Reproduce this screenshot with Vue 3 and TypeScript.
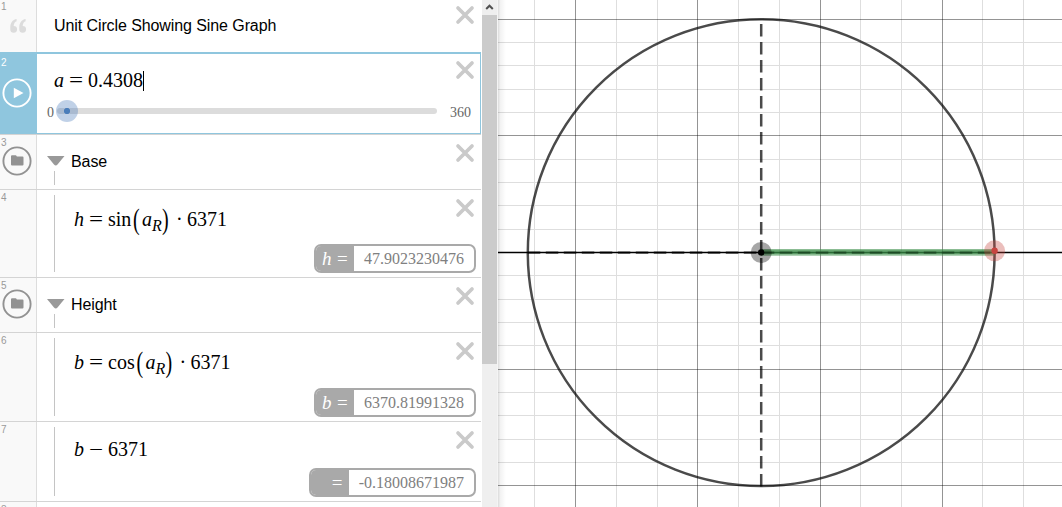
<script setup lang="ts">
interface Token { t: string; k?: string; w: number }
interface Row {
  n: number
  h: number
  kind: 'note' | 'slider' | 'folder' | 'expr'
  text?: string
  tokens?: Token[]
  label?: string
  value?: string
}

const call = (v: string, fn: string, fnWidth: number): Token[] => [
  { t: v, k: 'it', w: 15 },
  { t: '=', k: 'op', w: 19 },
  { t: fn, w: fnWidth },
  { t: '(', k: 'paren', w: 9 },
  { t: 'a', k: 'it', w: 10 },
  { t: 'R', k: 'sub', w: 10 },
  { t: ')', k: 'paren', w: 14 },
  { t: '·', w: 11 },
  { t: '6371', w: 40 },
]

const rows: Row[] = [
  { n: 1, h: 52, kind: 'note', text: 'Unit Circle Showing Sine Graph' },
  { n: 2, h: 83, kind: 'slider' },
  { n: 3, h: 55, kind: 'folder', text: 'Base' },
  { n: 4, h: 88, kind: 'expr', tokens: call('h', 'sin', 25), label: 'h', value: '47.9023230476' },
  { n: 5, h: 55, kind: 'folder', text: 'Height' },
  { n: 6, h: 89, kind: 'expr', tokens: call('b', 'cos', 28.5), label: 'b', value: '6370.81991328' },
  {
    n: 7, h: 80, kind: 'expr', label: '', value: '-0.18008671987',
    tokens: [{ t: 'b', k: 'it', w: 15 }, { t: '−', k: 'op', w: 19 }, { t: '6371', w: 40 }],
  },
  { n: 8, h: 60, kind: 'expr' },
]

const minorX = [534, 616, 657, 738, 779, 860, 901, 982, 1023]
const majorX = [575, 697, 820, 942]
const minorY = [42, 65, 89, 112, 159, 182, 205, 229, 275, 299, 322, 345, 392, 415, 439, 462]
const majorY = [19, 135, 369, 485]
</script>

<template>
  <div class="app">
    <div class="list">
      <div v-for="r in rows" :key="r.n" class="row" :class="r.kind" :style="{ height: r.h + 'px' }">
        <div class="gutter">
          <span class="num">{{ r.n }}</span>
          <svg v-if="r.kind === 'note'" class="quote" width="17" height="15" viewBox="0 0 17 15">
            <path d="M6.600 0C2.600.600.300 3.800.300 8.600V10.400a3.400 3.400 0 1 0 3.400-3.500C3.900 4.400 4.900 2.900 6.600 2.300ZM15.600 0C11.600.600 9.300 3.800 9.300 8.600V10.400a3.400 3.400 0 1 0 3.400-3.500C12.900 4.400 13.900 2.900 15.600 2.300Z" fill="#dcdcdc" />
          </svg>
          <svg v-else-if="r.kind === 'slider'" class="round" width="30" height="30" viewBox="0 0 30 30">
            <circle cx="15" cy="15" r="13.600" fill="none" stroke="#fff" stroke-width="1.900" />
            <path d="M11.800 9.800V20.200L21.500 15Z" fill="#fff" />
          </svg>
          <svg v-else-if="r.kind === 'folder'" class="round" width="30" height="30" viewBox="0 0 30 30">
            <circle cx="15" cy="15" r="13.600" fill="none" stroke="#929292" stroke-width="1.900" />
            <path d="M9 10.300q0-1 1-1h3.500q.8 0 1.100.8l.2.400h5.700q1 0 1 1v7.100q0 1-1 1H10q-1 0-1-1Z" fill="#929292" />
          </svg>
        </div>
        <div class="body">
          <span v-if="r.kind === 'note'" class="note-text">{{ r.text }}</span>
          <template v-else-if="r.kind === 'slider'">
            <div class="math first">
              <span class="it" style="width: 15px">a</span>
              <span class="op">=</span>
              <span>0.4308</span>
              <i class="caret"></i>
            </div>
            <div class="slide">
              <span class="min">0</span>
              <div class="track"><i class="thumb"></i></div>
              <span class="max">360</span>
            </div>
          </template>
          <template v-else-if="r.kind === 'folder'">
            <div class="folder-head">
              <svg width="18" height="10" viewBox="0 0 18 10"><path d="M0 0H17.500L10.500 8.500Q8.750 10.500 7 8.500Z" fill="#999" /></svg>
              <span>{{ r.text }}</span>
            </div>
            <i class="stub"></i>
          </template>
          <template v-else>
            <i class="tree"></i>
            <div v-if="r.tokens" class="math" :class="{ plain: !r.label }">
              <span v-for="(t, i) in r.tokens" :key="i" :class="t.k" :style="{ width: t.w + 'px' }">{{ t.t }}</span>
            </div>
            <div v-if="r.value" class="result">
              <div class="lab"><em>{{ r.label }}</em><b>=</b></div>
              <div class="val">{{ r.value }}</div>
            </div>
          </template>
          <svg class="close" width="20" height="20" viewBox="0 0 20 20">
            <path d="M3 3L17 17M17 3L3 17" stroke="#cacaca" stroke-width="3.700" stroke-linecap="round" />
          </svg>
        </div>
      </div>
    </div>
    <div class="scroll">
      <svg width="15" height="15" viewBox="0 0 15 15"><path d="M4.200 9L7.500 5.700L10.800 9" fill="none" stroke="#505050" stroke-width="2" /></svg>
      <i class="bar"></i>
    </div>
    <svg class="graph" width="564" height="507" viewBox="498 0 564 507">
      <defs>
        <linearGradient id="edge"><stop offset="0" stop-color="#000" stop-opacity=".14" /><stop offset=".3" stop-color="#000" stop-opacity=".05" /><stop offset="1" stop-color="#000" stop-opacity="0" /></linearGradient>
      </defs>
      <g shape-rendering="crispEdges">
        <rect v-for="x in minorX" :key="'a' + x" :x="x" y="0" width="1" height="507" fill="#dedede" />
        <rect v-for="y in minorY" :key="'b' + y" x="498" :y="y" width="564" height="1" fill="#dedede" />
        <rect v-for="x in majorX" :key="'c' + x" :x="x" y="0" width="1" height="507" fill="#000" fill-opacity=".42" />
        <rect v-for="y in majorY" :key="'d' + y" x="498" :y="y" width="564" height="1" fill="#000" fill-opacity=".42" />
      </g>
      <path d="M498 252.500H1062" stroke="#000" stroke-width="1.500" />
      <circle cx="761.200" cy="252.700" r="233.400" fill="none" stroke="#000" stroke-opacity=".71" stroke-width="2.500" />
      <path d="M761.200 486.500V19" stroke="#000" stroke-opacity=".71" stroke-width="2.500" stroke-dasharray="12.500 5.500" />
      <path d="M527.800 252.600H995" stroke="#000" stroke-opacity=".71" stroke-width="2.200" stroke-dasharray="12.500 5.500" />
      <path d="M761.200 252.500H994.600" stroke="#388c46" stroke-opacity=".4" stroke-width="7" />
      <path d="M761.200 251.900H994.600" stroke="#388c46" stroke-opacity=".6" stroke-width="5" />
      <path d="M761.800 252.600H995" stroke="#000" stroke-opacity=".3" stroke-width="1.800" stroke-dasharray="12.500 5.500" />
      <circle cx="761.200" cy="252.500" r="10.500" fill="#000" fill-opacity=".35" />
      <circle cx="761.200" cy="252.500" r="3.200" fill="#000" />
      <circle cx="994.600" cy="250.800" r="10.500" fill="#c74440" fill-opacity=".35" />
      <circle cx="994.600" cy="250.800" r="3.200" fill="#c74440" />
      <rect x="498" y="0" width="8" height="507" fill="url(#edge)" />
    </svg>
  </div>
</template>

<style>
body { margin: 0; overflow: hidden; background: #fff; }
</style>

<style scoped>
.app { display: flex; width: 1062px; height: 507px; overflow: hidden; background: #fff; font-family: "Liberation Sans", sans-serif; }
.list { width: 481px; height: 507px; overflow: hidden; flex: none; }
.row { display: flex; box-sizing: border-box; border-bottom: 1px solid #d4d4d4; }
.row.note { border-bottom: 0; }
.gutter { position: relative; box-sizing: border-box; width: 37px; flex: none; background: #f9f9f9; border-right: 1px solid #ddd; }
.slider .gutter { background: #8fc6de; border-color: #8fc6de; }
.num { position: absolute; left: 1px; top: 3px; font-size: 10px; line-height: 10px; color: #999; }
.note .num { top: 2px; }
.slider .num { top: 6px; color: #fff; }
.quote { position: absolute; left: 10px; top: 19px; }
.round { position: absolute; left: 2.4px; top: 11.4px; }
.slider .round { top: 25.5px; }
.body { position: relative; flex: 1; display: flex; flex-direction: column; box-sizing: border-box; }
.slider .body { border: solid #8fc6de; border-width: 2px 1px 1px 0; }
.close { position: absolute; right: 6px; top: 7.5px; }
.note .close { top: 5px; }
.slider .close { right: 5px; top: 6px; }
.note-text { margin: 17px 0 0 17px; font-size: 16px; line-height: 18px; letter-spacing: -.09px; color: #000; }
.math { display: flex; margin: 17px 0 0 37px; height: 24px; font: 20px/24px "Liberation Serif", serif; color: #000; white-space: pre; }
.math.first { margin: 14px 0 0 17px; }
.math.plain { margin-top: 15px; }
.it { font-style: italic; }
.op { transform-origin: 0 0; transform: scaleX(1.25); }
.first .op { width: 19px; }
.sub { font-style: italic; font-size: 16px; transform: translateY(7px); }
.paren { transform: scaleY(1.45); transform-origin: 50% 55%; }
.caret { width: 1px; height: 20px; margin: 3px 0 0; background: #000; }
.slide { display: flex; align-items: center; height: 16px; margin: 12px 0 0 10px; font: 14px/16px "Liberation Serif", serif; color: #666; }
.min { width: 10px; padding-top: 1px; }
.track { position: relative; width: 380px; height: 6px; margin-top: -2px; border-radius: 3px; background: #dcdcdc; }
.thumb { position: absolute; left: -1px; top: -8px; width: 22px; height: 22px; border-radius: 50%; background: radial-gradient(circle, #4a7dba 0 2.800px, rgba(70, 120, 185, .34) 3.300px); }
.max { margin-left: 13px; padding-top: 1px; }
.folder-head { display: flex; align-items: center; height: 20px; margin: 17px 0 0 10px; font-size: 16px; letter-spacing: -.09px; color: #000; }
.folder-head svg { margin: -3px 6px 0 0; }
.stub { width: 1px; height: 14px; margin: -1px 0 0 17px; background: #c4c4c4; }
.tree { position: absolute; left: 17px; top: 5px; bottom: 5px; width: 1px; background: #c4c4c4; }
.result { display: flex; align-self: flex-end; box-sizing: border-box; height: 29px; margin: auto 5px 4px 0; border: 2px solid #a9a9a9; border-radius: 7px; background: #fff; font: 16px/25px "Liberation Serif", serif; color: #808080; overflow: hidden; }
.lab { display: flex; width: 38px; background: #a9a9a9; color: #fff; font-size: 19px; }
.lab em { width: 15px; margin-left: 6px; }
.lab b { font-weight: normal; }
.val { padding: 0 10px; }
.scroll { width: 15px; margin-left: 1px; flex: none; background: #efefef; border-right: 1px solid #f4f4f4; }
.scroll svg { display: block; }
.bar { display: block; height: 349px; background: #cbcbcb; }
.graph { display: block; flex: none; }
</style>
